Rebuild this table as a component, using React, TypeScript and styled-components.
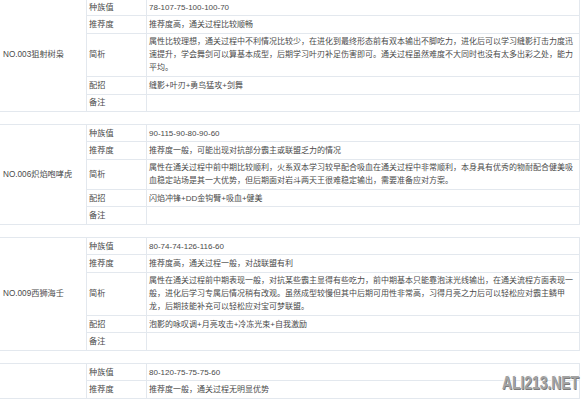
import React from "react";
import styled, { createGlobalStyle } from "styled-components";

const LINE = "#e3e8ee";
const TEXT = "#4a4a4a";

const Global = createGlobalStyle`
  html, body { margin: 0; padding: 0; background: #ffffff; }
  body {
    font-family: "Liberation Sans", "Noto Sans CJK SC", sans-serif;
    color: ${TEXT};
  }
`;

const Page = styled.div`
  position: relative;
  width: 584px;
  height: 401px;
  overflow: hidden;
  background: #ffffff;
`;

const List = styled.div`
  display: flex;
  flex-direction: column;
  gap: 12px;
  margin-top: -2px;
  width: 580px;
`;

const Block = styled.section`
  display: flex;
  border-top: 1px solid ${LINE};
  border-bottom: 1px solid ${LINE};
  border-right: 1px solid ${LINE};
  box-sizing: border-box;
  width: 580px;
`;

const NameCell = styled.div`
  width: 87px;
  flex: 0 0 87px;
  box-sizing: border-box;
  border-right: 1px solid ${LINE};
  display: flex;
  align-items: center;
  padding-left: 3px;
  font-size: 8.2px;
  line-height: 13px;
  white-space: nowrap;
`;

const Rows = styled.div`
  flex: 1;
  display: flex;
  flex-direction: column;
`;

const Row = styled.div`
  display: grid;
  grid-template-columns: 60px 1fr;
  & + & {
    border-top: 1px solid ${LINE};
  }
`;

const Label = styled.div`
  box-sizing: border-box;
  border-right: 1px solid ${LINE};
  padding: 1.7px 2px;
  font-size: 8.2px;
  line-height: 13px;
  display: flex;
  align-items: center;
  white-space: nowrap;
`;

const Value = styled.div`
  box-sizing: border-box;
  padding: 1.7px 1px 1.7px 2px;
  font-size: 8px;
  line-height: 13px;
  min-height: 16.4px;
  white-space: nowrap;
`;

const TextLine = styled.span`
  display: block;
`;

const Watermark = styled.div`
  position: absolute;
  left: 502px;
  top: 372px;
  font-family: "Liberation Sans", sans-serif;
  font-weight: 700;
  font-size: 19px;
  line-height: 22px;
  color: #a3a3a3;
  transform: scaleX(0.73);
  transform-origin: left center;
  text-shadow: 1px 1px 0 #7a7a7a, -1px -1px 0 #ffffff, 1px -1px 0 #f2f2f2,
    -1px 1px 0 #f2f2f2;
  white-space: nowrap;
`;

type Field = { label: string; lines: string[] };
type Entry = { name: string; fields: Field[] };

const entries: Entry[] = [
  {
    name: "NO.003狙射树枭",
    fields: [
      { label: "种族值", lines: ["78-107-75-100-100-70"] },
      { label: "推荐度", lines: ["推荐度高，通关过程比较顺畅"] },
      {
        label: "简析",
        lines: [
          "属性比较理想，通关过程中不利情况比较少，在进化到最终形态前有双本输出不脚吃力，进化后可以学习缝影打击力度迅",
          "速提升，学会舞剑可以算基本成型，后期学习叶刃补足伤害即可。通关过程虽然难度不大同时也没有太多出彩之处，能力",
          "平均。",
        ],
      },
      { label: "配招", lines: ["缝影+叶刃+勇鸟猛攻+剑舞"] },
      { label: "备注", lines: [] },
    ],
  },
  {
    name: "NO.006炽焰咆哮虎",
    fields: [
      { label: "种族值", lines: ["90-115-90-80-90-60"] },
      { label: "推荐度", lines: ["推荐度一般，可能出现对抗部分霸主或联盟乏力的情况"] },
      {
        label: "简析",
        lines: [
          "属性在通关过程中前中期比较顺利，火系双本学习较早配合吸血在通关过程中非常顺利，本身具有优秀的物耐配合健美吸",
          "血稳定站场是其一大优势，但后期面对岩斗两天王很难稳定输出，需要准备应对方案。",
        ],
      },
      { label: "配招", lines: ["闪焰冲锋+DD金钩臂+吸血+健美"] },
      { label: "备注", lines: [] },
    ],
  },
  {
    name: "NO.009西狮海壬",
    fields: [
      { label: "种族值", lines: ["80-74-74-126-116-60"] },
      { label: "推荐度", lines: ["推荐度高，通关过程一般，对战联盟有利"] },
      {
        label: "简析",
        lines: [
          "属性在通关过程前中期表现一般，对抗某些霸主显得有些吃力，前中期基本只能靠泡沫光线输出，在通关流程方面表现一",
          "般，进化后学习专属后情况稍有改观。虽然成型较慢但其中后期可用性非常高，习得月亮之力后可以轻松应对霸主鳞甲",
          "龙，后期技能补充可以轻松应对宝可梦联盟。",
        ],
      },
      { label: "配招", lines: ["泡影的咏叹调+月亮攻击+冷冻光束+自我激励"] },
      { label: "备注", lines: [] },
    ],
  },
  {
    name: "",
    fields: [
      { label: "种族值", lines: ["80-120-75-75-75-60"] },
      { label: "推荐度", lines: ["推荐度一般，通关过程无明显优势"] },
    ],
  },
];

export default function App() {
  return (
    <>
      <Global />
      <Page>
        <List>
          {entries.map((e, i) => (
            <Block key={i}>
              <NameCell>{e.name}</NameCell>
              <Rows>
                {e.fields.map((f) => (
                  <Row key={f.label}>
                    <Label>{f.label}</Label>
                    <Value>
                      {f.lines.map((t, j) => (
                        <TextLine key={j}>{t}</TextLine>
                      ))}
                    </Value>
                  </Row>
                ))}
              </Rows>
            </Block>
          ))}
        </List>
        <Watermark>ALI213.NET</Watermark>
      </Page>
    </>
  );
}
